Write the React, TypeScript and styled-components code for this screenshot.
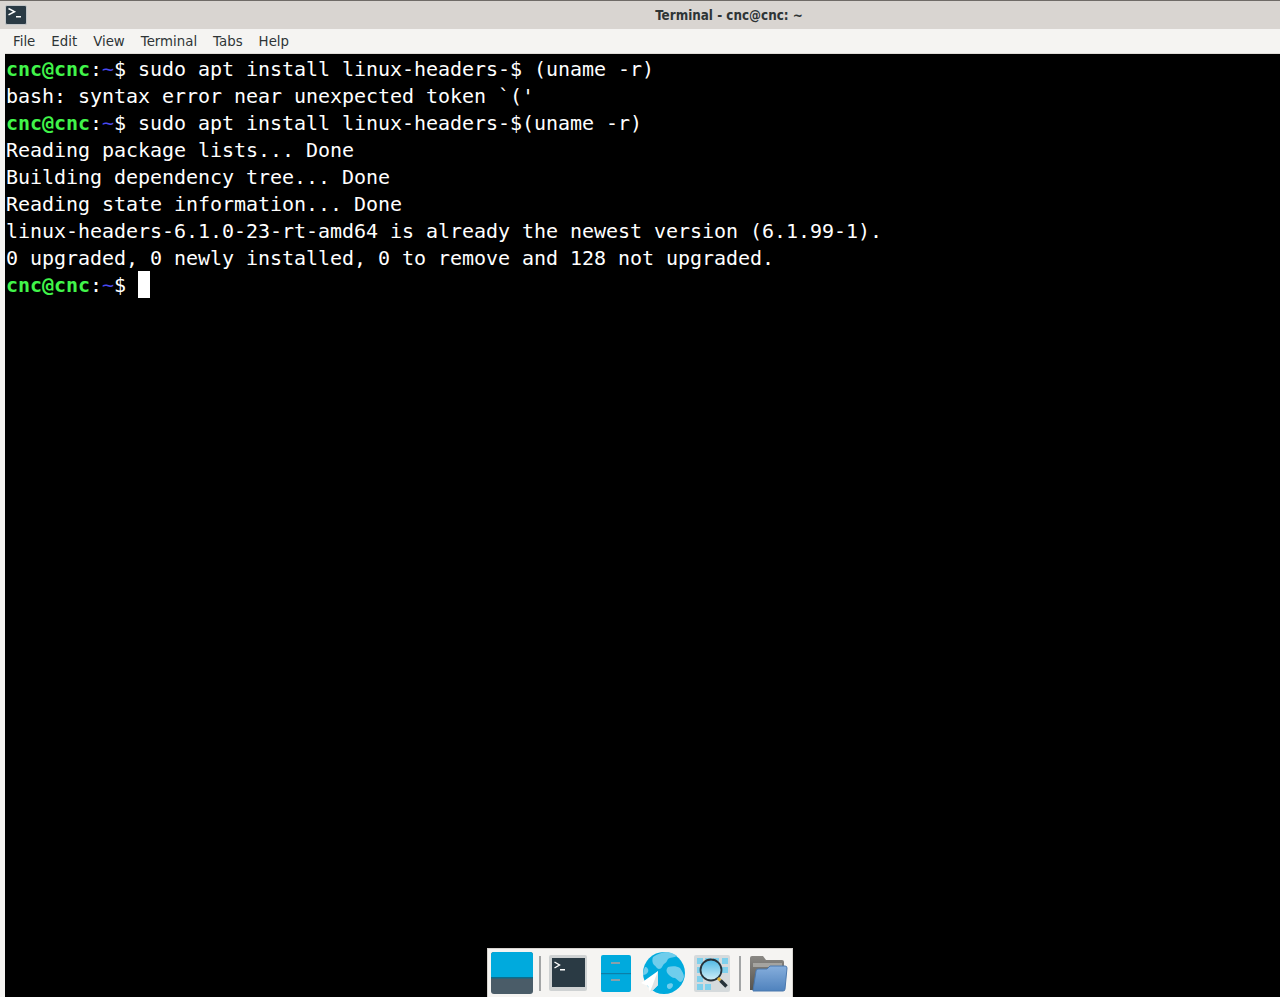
import React from "react";
import styled, { createGlobalStyle } from "styled-components";

const GlobalStyle = createGlobalStyle`
  html, body {
    margin: 0;
    padding: 0;
    background: #000000;
    overflow: hidden;
  }
`;

const Window = styled.div`
  position: relative;
  display: flex;
  flex-direction: column;
  width: 1280px;
  height: 997px;
  overflow: hidden;
  background: #f5f4f2;
`;

const TitleBar = styled.div`
  position: relative;
  display: flex;
  align-items: center;
  justify-content: center;
  box-sizing: border-box;
  height: 29px;
  padding-left: 178px;
  background: #d9d5d1;
  border-top: 1px solid #6f6b67;
  font-family: "DejaVu Sans Condensed", "DejaVu Sans", sans-serif;
  font-size: 13.33px;
  font-weight: bold;
  color: #2e3436;
`;

const TitleIcon = styled.svg`
  position: absolute;
  left: 5px;
  top: 4px;
`;

const MenuBar = styled.div`
  display: flex;
  box-sizing: border-box;
  height: 24px;
  padding-left: 5px;
  background: #f5f4f2;
  font-family: "DejaVu Sans", sans-serif;
  font-size: 13.33px;
  color: #2e3436;
`;

const MenuItem = styled.div`
  padding: 5px 8px 0;
`;

const Screen = styled.div`
  flex: 1;
  margin-left: 5px;
  padding: 2px 0 0 1px;
  background: #000000;
  border-top: 1px solid #e0ddd9;
  font-family: "DejaVu Sans Mono", monospace;
  font-size: 20px;
  letter-spacing: -0.04px;
  line-height: 27px;
  color: #ffffff;
  white-space: pre;
`;

const Line = styled.div`
  height: 27px;
`;

const User = styled.span`
  font-weight: bold;
  color: #41f54a;
`;

const Home = styled.span`
  color: #4a4af0;
`;

const Cursor = styled.span`
  display: inline-block;
  width: 12px;
  height: 27px;
  margin-top: -1px;
  background: #ffffff;
  vertical-align: top;
`;

const Dock = styled.div`
  position: absolute;
  left: 487px;
  bottom: 0;
  display: flex;
  align-items: center;
  box-sizing: border-box;
  width: 306px;
  height: 49px;
  padding-left: 3px;
  background: #f5f4f2;
  border: 1px solid #d6d3cf;
  border-bottom: none;
`;

const Separator = styled.div<{ $left: number }>`
  width: 2px;
  height: 35px;
  margin: 0 8px 0 ${(p) => p.$left}px;
  background: #a3a5a6;
`;

const DockIcon = styled.svg<{ $gap?: number }>`
  display: block;
  flex: none;
  overflow: visible;
  margin-right: ${(p) => p.$gap ?? 0}px;
`;

const Prompt = () => (
  <>
    <User>cnc@cnc</User>:<Home>~</Home>$
  </>
);

export default function App() {
  return (
    <Window>
      <GlobalStyle />
      <TitleBar>
        <TitleIcon width="22" height="20" viewBox="0 0 22 20">
          <rect x="0.5" y="0.5" width="21" height="19" rx="1.5" fill="#2a3a44" stroke="#c3c6c8" />
          <path d="M3.5 3.5l6 3.2-6 3.2" fill="none" stroke="#ffffff" strokeWidth="1.5" />
          <rect x="11" y="11" width="5" height="1.5" fill="#ffffff" />
        </TitleIcon>
        Terminal - cnc@cnc: ~
      </TitleBar>
      <MenuBar>
        {["File", "Edit", "View", "Terminal", "Tabs", "Help"].map((m) => (
          <MenuItem key={m}>{m}</MenuItem>
        ))}
      </MenuBar>
      <Screen>
        <Line>
          <Prompt /> sudo apt install linux-headers-$ (uname -r)
        </Line>
        <Line>bash: syntax error near unexpected token `('</Line>
        <Line>
          <Prompt /> sudo apt install linux-headers-$(uname -r)
        </Line>
        <Line>Reading package lists... Done</Line>
        <Line>Building dependency tree... Done</Line>
        <Line>Reading state information... Done</Line>
        <Line>linux-headers-6.1.0-23-rt-amd64 is already the newest version (6.1.99-1).</Line>
        <Line>0 upgraded, 0 newly installed, 0 to remove and 128 not upgraded.</Line>
        <Line>
          <Prompt /> <Cursor />
        </Line>
      </Screen>
      <Dock>
        <DockIcon width="42" height="42" viewBox="0 0 42 42">
          <rect x="0" y="0" width="42" height="42" rx="3" fill="#4a5c68" />
          <path d="M0 3a3 3 0 0 1 3-3h36a3 3 0 0 1 3 3v23H0z" fill="#00aadd" />
          <rect x="0" y="25" width="42" height="1.5" fill="#0b6d8e" />
        </DockIcon>
        <Separator $left={6} />
        <DockIcon width="38" height="36" viewBox="0 0 38 36" $gap={14}>
          <rect x="0" y="0" width="38" height="36" rx="2" fill="#cfd2d3" />
          <rect x="3" y="3" width="33" height="29" fill="#2a3a44" />
          <path d="M5.5 7l5 3-5 3" fill="none" stroke="#ffffff" strokeWidth="1.4" />
          <rect x="11" y="14" width="5" height="1.5" fill="#ffffff" />
        </DockIcon>
        <DockIcon width="30" height="37" viewBox="0 0 30 37" $gap={12}>
          <rect x="0" y="0" width="30" height="37" rx="2" fill="#00aadd" />
          <rect x="0" y="18" width="30" height="1.2" fill="#0b7fa8" />
          <rect x="10" y="7" width="9" height="2" fill="#8aa0aa" />
          <rect x="10" y="24" width="9" height="2" fill="#8aa0aa" />
        </DockIcon>
        <DockIcon width="42" height="42" viewBox="0 0 42 42" $gap={9}>
          <circle cx="21" cy="21" r="21" fill="#00aadd" />
          <path d="M10 5c4-3 9-5 15-5 4 1 7 2 9 4-3 2-7 1-9 3-1 2-2 4-4 5-2 2-2 5-5 5-2 0-3-3-5-4-2-2-2-6-1-8z" fill="#6fcdec" />
          <path d="M25 15c4-1 9-1 12 1 2 3 4 6 4 9-1 3-2 5-4 5-2-1-3-3-5-4-3 0-5-2-7-4-2-2-2-5 0-7z" fill="#6fcdec" />
          <path d="M2 15c2 0 4 2 3 5-1 2-3 3-5 3 0-3 1-6 2-8z" fill="#6fcdec" />
          <path d="M25 32c2-1 5-1 5 1s-2 4-4 4-3-4-1-5z" fill="#6fcdec" />
          <path d="M15 19L-2 31l7 3 2 6 3-2 5-5z" fill="#ffffff" />
          <path d="M15 19L7 40l3-2 5-5z" fill="#dfe3e5" />
        </DockIcon>
        <DockIcon width="36" height="37" viewBox="0 0 36 37">
          <defs>
            <linearGradient id="lens" x1="0" y1="0" x2="0" y2="1">
              <stop offset="0" stopColor="#4db8e4" />
              <stop offset="1" stopColor="#d2eff9" />
            </linearGradient>
          </defs>
          <rect x="0" y="0" width="36" height="37" rx="2" fill="#d5dadc" />
          <g fill="#7fd0ec">
            <rect x="3" y="3" width="6" height="6" />
            <rect x="11" y="3" width="6" height="6" />
            <rect x="19" y="3" width="6" height="6" />
            <rect x="28" y="3" width="6" height="6" />
            <rect x="28" y="12" width="6" height="6" />
            <rect x="3" y="12" width="6" height="6" />
            <rect x="3" y="21" width="6" height="6" />
            <rect x="3" y="29" width="6" height="6" />
            <rect x="11" y="29" width="6" height="6" />
          </g>
          <circle cx="17" cy="15" r="10.5" fill="url(#lens)" stroke="#26323a" strokeWidth="1.8" />
          <path d="M24 23l2.500 2.500" stroke="#e0b030" strokeWidth="3" />
          <path d="M26.500 25.500l6 6" stroke="#26323a" strokeWidth="3.500" />
        </DockIcon>
        <Separator $left={9} />
        <DockIcon width="38" height="37" viewBox="0 0 38 37">
          <defs>
            <linearGradient id="folderFront" x1="0" y1="0" x2="0" y2="1">
              <stop offset="0" stopColor="#86aedc" />
              <stop offset="1" stopColor="#4f82bd" />
            </linearGradient>
            <linearGradient id="folderBack" x1="0" y1="0" x2="0" y2="1">
              <stop offset="0" stopColor="#8a8884" />
              <stop offset="1" stopColor="#55534f" />
            </linearGradient>
          </defs>
          <path d="M1 3a2 2 0 0 1 2-2h11l3 4h16a2 2 0 0 1 2 2v28H1z" fill="url(#folderBack)" />
          <path d="M4 8h29v4H4z" fill="#a5a4a0" />
          <path d="M4 36l3-20a2 2 0 0 1 2-2h9l3-3h15a2 2 0 0 1 2 2l-2 21a2 2 0 0 1-2 2z" fill="url(#folderFront)" stroke="#4a78ad" />
        </DockIcon>
      </Dock>
    </Window>
  );
}
